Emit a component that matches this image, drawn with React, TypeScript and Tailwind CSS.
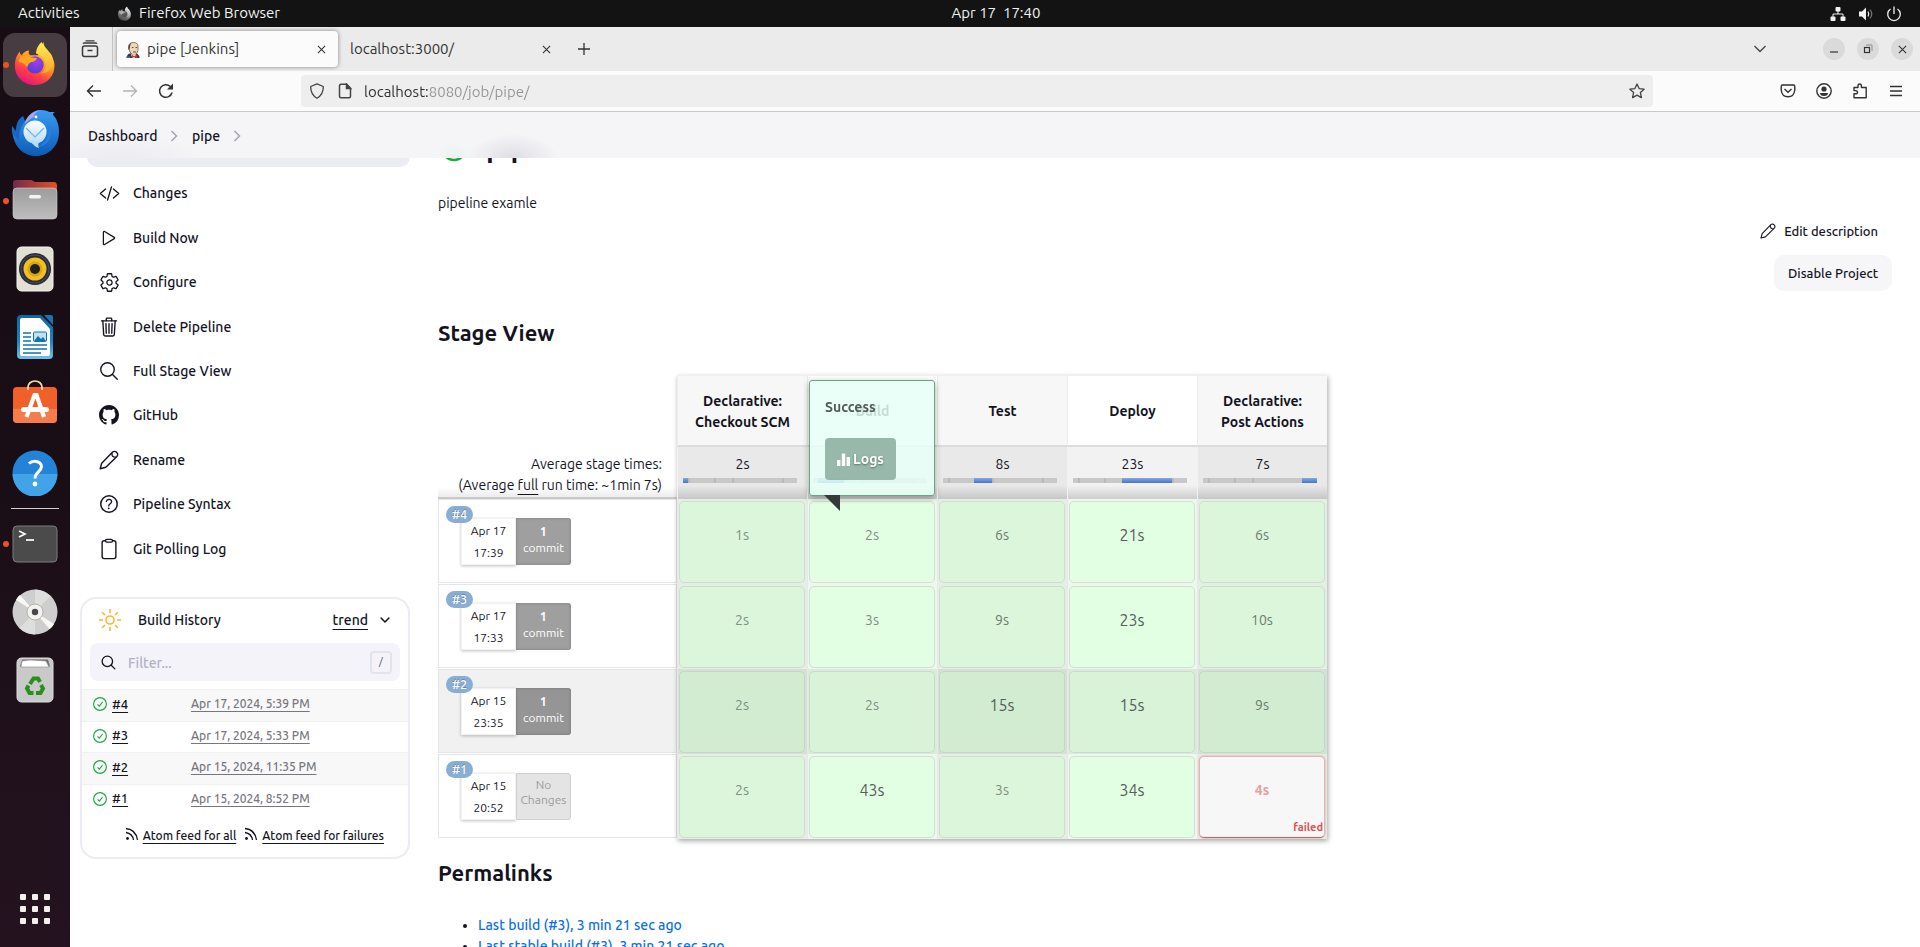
import type { ReactNode } from "react";
import {
  IoChevronDownOutline,
  IoClipboardOutline,
  IoCodeSlashOutline,
  IoHelpCircleOutline,
  IoPlayOutline,
  IoSearchOutline,
  IoSettingsOutline,
  IoTrashOutline,
} from "react-icons/io5";

/* ---------- Dock icons ---------- */

function FirefoxIcon({ className }: { className: string }) {
  return (
    <svg viewBox="0 0 48 48" className={className} aria-hidden="true">
      <defs>
        <linearGradient id="ffBody" x1="0.75" y1="0.1" x2="0.3" y2="1">
          <stop offset="0" stopColor="#ffe23a" />
          <stop offset="0.4" stopColor="#ff9a22" />
          <stop offset="0.7" stopColor="#ff3f45" />
          <stop offset="1" stopColor="#e4127f" />
        </linearGradient>
        <linearGradient id="ffFlame" x1="0.5" y1="0" x2="0.5" y2="1">
          <stop offset="0" stopColor="#fff04f" />
          <stop offset="1" stopColor="#ffa22d" />
        </linearGradient>
        <radialGradient id="ffGlobe" cx="0.6" cy="0.3" r="0.8">
          <stop offset="0" stopColor="#a33cf0" />
          <stop offset="1" stopColor="#4a3fd0" />
        </radialGradient>
      </defs>
      <path
        fill="url(#ffBody)"
        d="M3 27C3 20 5 16 8 12c0 2 1 3 2 4 2-3 5-5 8-5-1 2-1 3 1 5h8c1-6 3-10 6-14 0 5 3 7 6 12 5 6 6 11 5 16-1 10-10 17-20 17C12 47 3 38 3 27z"
      />
      <path fill="url(#ffFlame)" d="M31 2c-4 3-6 8-6 12 6 2 10 6 10 12 0 5-3 8-6 9 9 0 14-5 14-12 0-8-4-10-7-14-3-3-4-4-5-7z" />
      <circle cx="24" cy="26" r="9" fill="url(#ffGlobe)" />
      <path
        fill="#ffa51e"
        d="M9 17c4-1 8 0 10 1 3 0 5 1 7 1-1 3-4 4-6 4-2 1-4 3-4 6-2-4-4-5-9-6 0-2 1-4 2-6z"
      />
    </svg>
  );
}

function ThunderbirdIcon() {
  return (
    <svg viewBox="0 0 48 46" className="h-[46px] w-12" aria-hidden="true">
      <defs>
        <linearGradient id="tbBody" x1="0.5" y1="0" x2="0.5" y2="1">
          <stop offset="0" stopColor="#3a9bf4" />
          <stop offset="1" stopColor="#0b5cb5" />
        </linearGradient>
        <linearGradient id="tbMail" x1="0.5" y1="0" x2="0.5" y2="1">
          <stop offset="0" stopColor="#ffffff" />
          <stop offset="1" stopColor="#b9dcfb" />
        </linearGradient>
      </defs>
      <path fill="#1765c4" d="M1 16c2 2 3 4 4 5 0-7 2-12 7-15 2 4 3 7 2 12l-4 20C3 32 0 24 1 16z" />
      <path
        fill="url(#tbBody)"
        d="M17 8c2-5 7-8 13-8 4 0 7 1 8 2h6c-2 1-2 2-2 3 4 4 6 10 6 17 0 14-10 24-23 24C12 46 3 36 2 24l6 7c-1-9 3-18 9-23z"
      />
      <path fill="#a9a2f2" d="M14 14c1-8 8-13 16-14-5 2-7 4-7 7-3 1-6 4-9 7z" />
      <path fill="#2a7fe0" d="M36 12c5 9 1 20-9 25 13-2 17-16 9-25z" />
      <circle cx="25" cy="7" r="1.4" fill="#fff" />
      <circle cx="24" cy="22" r="11.5" fill="url(#tbMail)" />
      <path fill="#b9dcfb" d="M20 31c1 3 4 6 8 7-1-2-1-4 0-6z" />
      <path d="M15 18l9 9 9-9" fill="none" stroke="#6db3ee" strokeWidth="1.2" />
    </svg>
  );
}

function FilesIcon() {
  return (
    <svg viewBox="0 0 48 42" className="mb-1 h-[42px] w-12" aria-hidden="true">
      <defs>
        <linearGradient id="fiBack" x1="0" x2="1">
          <stop offset="0" stopColor="#74284f" />
          <stop offset="1" stopColor="#e2521f" />
        </linearGradient>
        <linearGradient id="fiFront" x1="0" y1="0" x2="0" y2="1">
          <stop offset="0" stopColor="#9c9c9c" />
          <stop offset="1" stopColor="#bdbdbd" />
        </linearGradient>
      </defs>
      <path fill="url(#fiBack)" d="M2 14V5q0-3 3-3h15q1 0 2 1l2 1h19q3 0 3 4v8z" />
      <rect x="2" y="10" width="44" height="31" rx="4" fill="url(#fiFront)" stroke="#d0d0d0" strokeWidth="0.6" />
      <rect x="18" y="17" width="12" height="3.5" rx="1.7" fill="#f4f4f4" />
    </svg>
  );
}

function SpeakerIcon() {
  return (
    <svg viewBox="0 0 38 46" className="h-[46px] w-[38px]" aria-hidden="true">
      <rect x="1" y="1" width="36" height="44" rx="4.5" fill="#e2dfd5" stroke="#f5f3ec" />
      <circle cx="19" cy="23" r="16" fill="#2c2c38" />
      <circle cx="19" cy="23" r="14" fill="none" stroke="#4c4c5a" />
      <circle cx="19" cy="23" r="11.5" fill="#f0bf26" />
      <circle cx="19" cy="23" r="7.5" fill="#d9a50c" />
      <circle cx="19" cy="23" r="5" fill="#1f1f1f" />
    </svg>
  );
}

function WriterIcon() {
  return (
    <svg viewBox="0 0 38 46" className="h-[46px] w-[38px]" aria-hidden="true">
      <defs>
        <linearGradient id="wrBg" x1="0" y1="0" x2="0" y2="1">
          <stop offset="0" stopColor="#0f66a0" />
          <stop offset="0.6" stopColor="#1c85c2" />
          <stop offset="1" stopColor="#74c1ea" />
        </linearGradient>
      </defs>
      <path fill="url(#wrBg)" d="M5 1h20l12 12v28q0 4-4 4H5q-4 0-4-4V5q0-4 4-4z" />
      <path fill="#1278b5" d="M28 1h7q2 0 2 2v8z" />
      <path fill="#fff" d="M6 4h18l10 11v25q0 2-2 2H6q-2 0-2-2V6q0-2 2-2z" />
      <path d="M7 19h8M7 23h8M7 27h8M7 31h24M7 35h24M7 39h18" stroke="#0f74b0" strokeWidth="1.7" />
      <rect x="17.5" y="18" width="13" height="9.5" rx="1" fill="#bfe2f5" stroke="#0f74b0" />
      <path fill="#0f74b0" d="M18 27l4-5 3 3 2-2 3 4z" />
    </svg>
  );
}

function SoftwareIcon() {
  return (
    <svg viewBox="0 0 48 46" className="mb-2 h-[46px] w-12" aria-hidden="true">
      <rect x="2" y="9" width="44" height="36" rx="4" fill="#f0602b" />
      <path fill="#f58a59" d="M2 31h44v10q0 4-4 4H6q-4 0-4-4z" opacity="0.7" />
      <path d="M17 12V9a7 6 0 0 1 14 0v3" fill="none" stroke="#f3dfae" strokeWidth="1.7" />
      <path d="M15.5 39L23.5 17h2L33 39" fill="none" stroke="#fff" strokeWidth="4.2" />
      <rect x="10" y="29" width="28" height="5" rx="2.5" fill="#fff" />
    </svg>
  );
}

function HelpIcon() {
  return (
    <svg viewBox="0 0 46 46" className="size-[46px]" aria-hidden="true">
      <circle cx="23" cy="23" r="22.5" fill="#2383d6" />
      <path fill="#43a3e8" d="M0.5 24h45a22.5 22.5 0 0 1-45 0z" />
      <path d="M17 13.5c3-3 12-3.5 12.5 3 0 5-6.5 5.5-6.5 12" fill="none" stroke="#fff" strokeWidth="3" />
      <circle cx="23" cy="34" r="2.4" fill="#fff" />
    </svg>
  );
}

function TerminalIcon() {
  return (
    <svg viewBox="0 0 46 38" className="h-[38px] w-[46px]" aria-hidden="true">
      <rect x="1" y="1" width="44" height="36" rx="4" fill="#4b4b4b" stroke="#7c7c7c" />
      <path d="M7 6l6 3-6 3" fill="none" stroke="#fff" strokeWidth="1.7" />
      <path d="M14 15h8" stroke="#fff" strokeWidth="1.7" />
    </svg>
  );
}

function DiscIcon() {
  return (
    <svg viewBox="0 0 46 46" className="size-[46px]" aria-hidden="true">
      <circle cx="23" cy="23" r="22.5" fill="#cecece" />
      <path fill="#dedede" d="M23 23V0.5a22.5 22.5 0 0 1 15.5 6.5zM23 23v22.5a22.5 22.5 0 0 1-15.5-6.5z" />
      <path fill="#f8f8f2" d="M23 23L4 11q2-4 4-5zM23 23l19 12q-1.5 3-4.5 5z" />
      <circle cx="23" cy="23" r="8" fill="#f2f2f2" stroke="#b9b19b" />
      <circle cx="23" cy="23" r="3.2" fill="#484848" />
    </svg>
  );
}

function TrashCanIcon() {
  return (
    <svg viewBox="0 0 38 46" className="h-[46px] w-[38px]" aria-hidden="true">
      <rect x="1" y="1" width="36" height="44" rx="4.5" fill="#c9c9c9" stroke="#dddddd" />
      <path fill="#6f6f6f" d="M6 2.5h26l2 7H4z" />
      <path fill="#fff" stroke="#888" strokeWidth="0.6" d="M6 4l8-1 16 1 3 6H5z" />
      <g fill="none" stroke="#2c8d20" strokeWidth="4">
        <path d="M14 27l3.500-5.500h4.500l2 3.500" />
        <path d="M25 28l2 3.500-2.500 4.500H20" />
        <path d="M17.500 36H13.500l-2.500-4.500 1.500-3" />
      </g>
    </svg>
  );
}

function AppGridIcon() {
  return (
    <span className="grid grid-cols-3 gap-1.5">
      {[0, 1, 2, 3, 4, 5, 6, 7, 8].map((n) => (
        <span key={n} className="size-1.5 rounded-[1px] bg-[#f2f0ee]" />
      ))}
    </span>
  );
}

type DockEntry = { label: string; icon: ReactNode; running?: boolean; active?: boolean };

const pinned: DockEntry[] = [
  { label: "Firefox Web Browser", icon: <FirefoxIcon className="mb-1 size-[46px]" />, running: true, active: true },
  { label: "Thunderbird Mail", icon: <ThunderbirdIcon /> },
  { label: "Files", icon: <FilesIcon />, running: true },
  { label: "Rhythmbox", icon: <SpeakerIcon /> },
  { label: "LibreOffice Writer", icon: <WriterIcon /> },
  { label: "Ubuntu Software", icon: <SoftwareIcon /> },
  { label: "Help", icon: <HelpIcon /> },
];

const opened: DockEntry[] = [
  { label: "Terminal", icon: <TerminalIcon />, running: true },
  { label: "Disc", icon: <DiscIcon /> },
  { label: "Trash", icon: <TrashCanIcon /> },
];

function DockList({ entries }: { entries: DockEntry[] }) {
  return (
    <ul className="flex flex-col gap-1">
      {entries.map((e) => (
        <li key={e.label} className="relative">
          <button
            type="button"
            aria-label={e.label}
            className={`flex size-16 items-center justify-center rounded-xl ${e.active ? "bg-[#463c42]" : ""}`}
          >
            {e.icon}
          </button>
          {e.running && <span className="absolute top-[29px] left-0 size-1.5 rounded-full bg-[#e95420]" />}
        </li>
      ))}
    </ul>
  );
}

function Dock() {
  return (
    <aside className="flex w-[70px] shrink-0 flex-col items-center bg-linear-to-b from-[#190d15] via-[#1a0e16] to-[#24131f] py-1.5">
      <DockList entries={pinned} />
      <hr className="my-[3px] w-12 border-[#d4d0d2]" />
      <DockList entries={opened} />
      <button type="button" aria-label="Show applications" className="mt-auto flex size-16 items-center justify-center">
        <AppGridIcon />
      </button>
    </aside>
  );
}

/* ---------- System bar ---------- */

function SystemBar() {
  return (
    <header className="grid h-[27px] shrink-0 grid-cols-3 items-center bg-[#131313] text-[15px] text-[#f2f2f2]">
      <div className="flex items-center pl-[18px]">
        <button type="button" className="w-[99px] text-left">Activities</button>
        <button type="button" className="flex items-center gap-[7px]">
          <FirefoxIcon className="size-[15px] grayscale" />
          Firefox Web Browser
        </button>
      </div>
      <time className="pl-[72px] text-center whitespace-pre">Apr 17  17:40</time>
      <div className="flex items-center justify-end gap-3 pr-[18px]">
        <svg viewBox="0 0 16 16" className="size-4" fill="#f2f2f2" aria-label="Wired network">
          <rect x="5.5" y="1" width="5" height="4.5" rx="1" />
          <rect x="0.5" y="10.5" width="5" height="4.5" rx="1" />
          <rect x="10.5" y="10.5" width="5" height="4.5" rx="1" />
          <path d="M8 5v3M3 11V8h10v3" fill="none" stroke="#f2f2f2" strokeWidth="1" />
        </svg>
        <svg viewBox="0 0 16 16" className="size-4" aria-label="Volume">
          <path fill="#f2f2f2" d="M1 5.5h3L8 1.5v13l-4-4H1z" />
          <path d="M10 5.5q1.5 2.5 0 5" fill="none" stroke="#f2f2f2" strokeWidth="1.2" />
          <path d="M12 3.5q3.5 4.5 0 9" fill="none" stroke="#777" strokeWidth="1.2" />
        </svg>
        <svg viewBox="0 0 16 16" className="size-4" aria-label="Power">
          <path d="M4.5 3a6.3 6.3 0 1 0 7 0M8 0.5V8" fill="none" stroke="#f2f2f2" strokeWidth="1.3" />
        </svg>
      </div>
    </header>
  );
}

/* ---------- Browser chrome ---------- */

function CrossIcon({ className }: { className: string }) {
  return (
    <svg viewBox="0 0 10 10" className={className} aria-hidden="true">
      <path d="M1 1l8 8M9 1l-8 8" fill="none" stroke="currentColor" strokeWidth="1.2" />
    </svg>
  );
}

function JenkinsFavicon() {
  return (
    <svg viewBox="0 0 16 16" className="size-4 shrink-0" aria-hidden="true">
      <path fill="#3a3a3a" d="M1.5 16q0-3 3-4.5h7q3 1.5 3 4.5z" />
      <path fill="#f0d6b7" stroke="#5a4636" strokeWidth="0.7" d="M4 4q0-3.5 4.5-3.5T13 4.5v4Q12 13 9 13T4.5 9z" />
      <path fill="#5b4a42" d="M3.5 8Q2 2.5 6.5 0.7 5 3 5 5.5z" />
      <path d="M7 5.5h1.5M10.5 5.5H12M8 10h3" stroke="#4a3a30" strokeWidth="0.9" />
      <path fill="#fff" d="M6 12.5h5l-1.5 3.5h-2z" />
      <path fill="#d33833" d="M7 13l2.5 1L12 13v3l-2.5-1L7 16z" />
      <path fill="#2d6ea3" d="M2 14.5h3l0.5 1.5h-4z" />
    </svg>
  );
}

function TabStrip() {
  return (
    <div className="flex h-11 shrink-0 items-center bg-[#ebebeb] pr-[7px] text-[15px] text-[#333]">
      <div className="flex h-full w-[43px] items-center justify-center border-r border-[#c4c4c4] pr-0.5">
        <button type="button" aria-label="Recent browsing">
          <svg viewBox="0 0 18 18" className="size-[18px]" fill="none" stroke="#3a3a3a" strokeWidth="1.5" aria-hidden="true">
            <rect x="1.5" y="6" width="15" height="10.5" rx="2" />
            <path d="M2 3.7q0.5-0.7 1.5-0.7h11q1 0 1.5 0.7M4.5 0.8h9M6.5 10.5h5" strokeWidth="1.3" />
          </svg>
        </button>
      </div>
      <div className="ml-1 flex h-9 w-[221px] items-center gap-1.5 rounded-sm bg-[#fbfbfb] pt-px pl-2 shadow-[0_0_4px_rgba(0,0,0,0.45)]">
        <JenkinsFavicon />
        <span className="grow">pipe [Jenkins]</span>
        <button type="button" aria-label="Close tab" className="mr-3">
          <CrossIcon className="size-[9px]" />
        </button>
      </div>
      <div className="flex w-[225px] items-center pt-px pl-3">
        <span className="grow">localhost:3000/</span>
        <button type="button" aria-label="Close tab" className="mr-3">
          <CrossIcon className="size-[9px]" />
        </button>
      </div>
      <button type="button" aria-label="New tab" className="ml-[15px]">
        <svg viewBox="0 0 12 12" className="size-3" aria-hidden="true">
          <path d="M6 0v12M0 6h12" stroke="#333" strokeWidth="1.3" />
        </svg>
      </button>
      <button type="button" aria-label="List all tabs" className="mr-[57px] ml-auto">
        <svg viewBox="0 0 12 8" className="h-2 w-3" aria-hidden="true">
          <path d="M0.5 1L6 6.5 11.5 1" fill="none" stroke="#444" strokeWidth="1.3" />
        </svg>
      </button>
      <div className="flex gap-3">
        <button type="button" aria-label="Minimize" className="flex size-[22px] items-center justify-center rounded-full bg-[#dadada]">
          <svg viewBox="0 0 10 10" className="size-2.5" aria-hidden="true">
            <path d="M1 8h8" stroke="#333" strokeWidth="1.2" />
          </svg>
        </button>
        <button type="button" aria-label="Restore" className="flex size-[22px] items-center justify-center rounded-full bg-[#dadada]">
          <svg viewBox="0 0 10 10" className="size-2.5" fill="none" aria-hidden="true">
            <path d="M3 1h6v6" stroke="#8c8c8c" strokeWidth="1" />
            <rect x="1.5" y="3.5" width="5" height="5" stroke="#333" strokeWidth="1.2" />
          </svg>
        </button>
        <button type="button" aria-label="Close window" className="flex size-[22px] items-center justify-center rounded-full bg-[#dadada]">
          <CrossIcon className="size-[9px]" />
        </button>
      </div>
    </div>
  );
}

function Toolbar() {
  return (
    <div className="flex h-[41px] shrink-0 items-center border-b border-[#c9c9c9] bg-[#fbfbfb] px-4 text-[#333]">
      <div className="flex w-[215px] items-center gap-5">
        <button type="button" aria-label="Back">
          <svg viewBox="0 0 16 16" className="size-4" fill="none" stroke="#333" strokeWidth="1.4" aria-hidden="true">
            <path d="M1 8h14M7 2.5L1.5 8 7 13.5" />
          </svg>
        </button>
        <button type="button" aria-label="Forward" disabled>
          <svg viewBox="0 0 16 16" className="size-4" fill="none" stroke="#b4b4b4" strokeWidth="1.4" aria-hidden="true">
            <path d="M1 8h14M9 2.5L14.5 8 9 13.5" />
          </svg>
        </button>
        <button type="button" aria-label="Reload">
          <svg viewBox="0 0 16 16" className="size-4" aria-hidden="true">
            <path d="M14 9.5A6.3 6.3 0 1 1 12.3 3.5" fill="none" stroke="#333" strokeWidth="1.5" />
            <path d="M15 0.5v6H9z" fill="#333" />
          </svg>
        </button>
      </div>
      <div className="flex h-8 max-w-[1352px] grow items-center rounded bg-[#eeeeee] px-2">
        <svg viewBox="0 0 16 16" className="size-4" fill="none" stroke="#444" strokeWidth="1.3" aria-hidden="true">
          <path d="M8 0.8L14.3 3.5Q14.5 11.5 8 15.2 1.5 11.5 1.7 3.5z" strokeLinejoin="round" />
        </svg>
        <svg viewBox="0 0 14 16" className="ml-[13px] h-4 w-3.5" fill="none" stroke="#444" strokeWidth="1.5" aria-hidden="true">
          <path d="M8.5 1.2H3Q1.5 1.2 1.5 2.7v10.6q0 1.5 1.5 1.5h8q1.5 0 1.5-1.5V5.2z" />
          <path d="M8.5 1v4.5h4z" fill="#444" />
        </svg>
        <input
          aria-label="Address"
          readOnly
          value="localhost:8080/job/pipe/"
          className="mt-0.5 ml-3 min-w-0 grow bg-[linear-gradient(to_right,#2b2b2b_64px,#949494_64px)] bg-clip-text text-[15px] text-transparent outline-none"
        />
        <button type="button" aria-label="Bookmark this page">
          <svg viewBox="0 0 16 16" className="size-4" fill="none" stroke="#444" strokeWidth="1.3" strokeLinejoin="round" aria-hidden="true">
            <path d="M8 1l2.1 4.6 5 0.6-3.7 3.4 1 5L8 12.1l-4.4 2.5 1-5L0.9 6.2l5-0.6z" />
          </svg>
        </button>
      </div>
      <div className="ml-auto flex items-center gap-5">
        <button type="button" aria-label="Save to Pocket">
          <svg viewBox="0 0 16 16" className="size-4" fill="none" stroke="#333" strokeWidth="1.4" aria-hidden="true">
            <path d="M2.5 2h11q1.3 0 1.3 1.3V7Q14 13.8 8 13.8T1.2 7V3.3Q1.2 2 2.5 2z" />
            <path d="M4.500 6L8 9.300 11.500 6" />
          </svg>
        </button>
        <button type="button" aria-label="Account">
          <svg viewBox="0 0 16 16" className="size-4" aria-hidden="true">
            <circle cx="8" cy="8" r="7.2" fill="none" stroke="#333" strokeWidth="1.4" />
            <circle cx="8" cy="6" r="2.6" fill="#333" />
            <path d="M4 10h8q0 3-4 3t-4-3z" fill="#333" />
          </svg>
        </button>
        <button type="button" aria-label="Extensions">
          <svg viewBox="0 0 16 16" className="size-4" fill="none" stroke="#333" strokeWidth="1.4" strokeLinejoin="round" aria-hidden="true">
            <path d="M2 4.5h4V3q0-2 1.7-2t1.7 2v1.5h4.8v10.3H2v-4h1.5q2 0 2-1.6t-2-1.6H2z" />
          </svg>
        </button>
        <button type="button" aria-label="Open menu">
          <svg viewBox="0 0 16 16" className="size-4" aria-hidden="true">
            <path d="M2 3.5h12M2 8h12M2 12.5h12" stroke="#333" strokeWidth="1.4" />
          </svg>
        </button>
      </div>
    </div>
  );
}

/* ---------- Jenkins page ---------- */

function GithubMark() {
  return (
    <svg viewBox="0 0 16 16" className="size-5" fill="currentColor" aria-hidden="true">
      <path d="M8 0C3.58 0 0 3.58 0 8c0 3.54 2.29 6.53 5.47 7.59.4.07.55-.17.55-.38 0-.19-.01-.82-.01-1.49-2.01.37-2.53-.49-2.69-.94-.09-.23-.48-.94-.82-1.13-.28-.15-.68-.52-.01-.53.63-.01 1.08.58 1.23.82.72 1.21 1.87.87 2.33.66.07-.52.28-.87.51-1.07-1.78-.2-3.64-.89-3.64-3.95 0-.87.31-1.59.82-2.15-.08-.2-.36-1.02.08-2.12 0 0 .67-.21 2.2.82.64-.18 1.32-.27 2-.27.68 0 1.36.09 2 .27 1.53-1.04 2.2-.82 2.2-.82.44 1.1.16 1.92.08 2.12.51.56.82 1.27.82 2.15 0 3.07-1.87 3.75-3.65 3.95.29.25.54.73.54 1.48 0 1.07-.01 1.93-.01 2.2 0 .21.15.46.55.38A8.013 8.013 0 0 0 16 8c0-4.42-3.58-8-8-8z" />
    </svg>
  );
}

function PencilIcon({ className }: { className: string }) {
  return (
    <svg
      viewBox="0 0 20 20"
      className={className}
      fill="none"
      stroke="currentColor"
      strokeWidth="1.4"
      strokeLinejoin="round"
      aria-hidden="true"
    >
      <path d="M1.200 18.800L2.700 13.300 13.600 2.100a2.600 2.600 0 0 1 3.700 0l0.600 0.600a2.600 2.600 0 0 1 0 3.700L6.800 17.300z" />
      <path d="M12.800 3l0.300 2.200q0.300 1.400 1.700 1.700l2.200 0.300" />
    </svg>
  );
}

function BreadcrumbSeparator() {
  return (
    <svg viewBox="0 0 8 12" className="h-3 w-2" aria-hidden="true">
      <path d="M1.5 1l5 5-5 5" fill="none" stroke="#a5a3b5" strokeWidth="1.5" />
    </svg>
  );
}

function Breadcrumbs() {
  return (
    <nav
      aria-label="Breadcrumbs"
      className="sticky top-0 z-10 flex h-[46px] items-center bg-[#f5f5f8] bg-[radial-gradient(45px_24px_at_443px_46px,#dddde4,transparent),radial-gradient(80px_22px_at_50px_46px,#ebebf0,transparent),radial-gradient(20px_16px_at_384px_46px,#e9f3ee,transparent)] pt-0.5 pl-[18px] text-sm font-medium"
    >
      <a href="#dashboard" className="w-[82px]">Dashboard</a>
      <BreadcrumbSeparator />
      <a href="#pipe" className="ml-[14px] w-[41px]">pipe</a>
      <BreadcrumbSeparator />
    </nav>
  );
}

const tasks: { label: string; icon: ReactNode }[] = [
  { label: "Changes", icon: <IoCodeSlashOutline className="size-[21px]" /> },
  { label: "Build Now", icon: <IoPlayOutline className="size-5" /> },
  { label: "Configure", icon: <IoSettingsOutline className="size-[21px]" /> },
  { label: "Delete Pipeline", icon: <IoTrashOutline className="size-[22px]" /> },
  { label: "Full Stage View", icon: <IoSearchOutline className="size-[22px]" /> },
  { label: "GitHub", icon: <GithubMark /> },
  { label: "Rename", icon: <PencilIcon className="size-5" /> },
  { label: "Pipeline Syntax", icon: <IoHelpCircleOutline className="size-6" /> },
  { label: "Git Polling Log", icon: <IoClipboardOutline className="size-[22px]" /> },
];

const builds = [
  { id: "#4", date: "Apr 17, 2024, 5:39 PM" },
  { id: "#3", date: "Apr 17, 2024, 5:33 PM" },
  { id: "#2", date: "Apr 15, 2024, 11:35 PM" },
  { id: "#1", date: "Apr 15, 2024, 8:52 PM" },
];

function FeedIcon() {
  return (
    <svg viewBox="0 0 14 14" className="mb-1 size-3.5" fill="none" stroke="#14141f" strokeWidth="1.3" aria-hidden="true">
      <path d="M1 1.500Q11 2.500 12.500 13M1 5.500q6.500 1 7.500 7.500" />
      <circle cx="2.5" cy="11.5" r="1.4" fill="#14141f" stroke="none" />
    </svg>
  );
}

function BuildHistory() {
  return (
    <section className="mt-[26px] ml-2.5 rounded-2xl border-2 border-[#ebebf3] pb-3">
      <div className="flex h-11 items-center pr-4 pb-0.5 pl-4 text-sm font-medium">
        <svg viewBox="0 0 24 24" className="size-6" fill="none" stroke="#fdb52b" strokeWidth="1.6" aria-hidden="true">
          <circle cx="12" cy="12" r="4" />
          <path d="M12 1v4M12 19v4M1 12h4M19 12h4M4.200 4.200L7 7M17 17l2.800 2.800M4.200 19.800L7 17M17 7l2.800-2.800" />
        </svg>
        <h2 className="ml-4 grow">Build History</h2>
        <a href="#trend" className="underline underline-offset-4">trend</a>
        <button type="button" aria-label="Collapse build history" className="ml-2.5">
          <IoChevronDownOutline className="size-[14px] [&_path]:stroke-[56px]" />
        </button>
      </div>
      <label className="mx-2 flex h-[38px] items-center rounded-lg bg-[#f3f3f9] pr-2 pl-2.5">
        <IoSearchOutline className="size-[17px] [&_path]:stroke-[40px]" />
        <input
          type="search"
          aria-label="Filter builds"
          placeholder="Filter..."
          className="mt-0.5 ml-[11px] min-w-0 grow bg-transparent text-sm font-medium outline-none placeholder:text-[#b1b1c6]"
        />
        <kbd className="flex h-[23px] w-[22px] items-center justify-center rounded border-2 border-[#e4e3ec] font-[Roboto,sans-serif] text-xs text-[#6c6a80]">
          /
        </kbd>
      </label>
      <table className="mt-2 h-[126px] w-full table-fixed text-xs font-medium">
        <tbody>
          {builds.map((b) => (
            <tr key={b.id} className="border-t border-[#f1f1f1] odd:bg-[#f8f8f8]">
              <td className="w-[109px] pb-0.5 pl-[11px]">
                <a href={b.id} className="flex items-center gap-[5px]">
                  <svg viewBox="0 0 16 16" className="size-3.5" fill="none" stroke="#1ea64b" aria-hidden="true">
                    <circle cx="8" cy="8" r="7.3" strokeWidth="1.3" />
                    <path d="M5.200 8.500l2 2 3.800-4.800" strokeWidth="1.3" />
                  </svg>
                  <span className="text-[13px] underline underline-offset-3">{b.id}</span>
                </a>
              </td>
              <td className="pb-0.5">
                <a href={b.id} className="text-[#77767e] underline underline-offset-3">{b.date}</a>
              </td>
            </tr>
          ))}
        </tbody>
      </table>
      <div className="mt-3 flex items-center justify-end pr-6 text-xs font-medium">
        <FeedIcon />
        <a href="#rss-all" className="mr-2 ml-1 underline underline-offset-3">Atom feed for all</a>
        <FeedIcon />
        <a href="#rss-failed" className="ml-1 underline underline-offset-3">Atom feed for failures</a>
      </div>
    </section>
  );
}

function Sidebar() {
  return (
    <aside className="w-[340px] shrink-0 pt-[15px]">
      <nav aria-label="Project" className="flex flex-col gap-1 pl-[17px] text-sm font-medium">
        <a href="#status" className="flex h-10 items-center rounded-[10px] bg-[#ecedf3] pl-[45px]">
          Status
        </a>
        <ul className="grid h-[400px] auto-rows-fr">
          {tasks.map((t) => (
            <li key={t.label} className="flex items-center">
              <a href={`#${t.label}`} className="flex items-center gap-3 pl-2.5">
                <span className="flex w-6 justify-center">{t.icon}</span>
                {t.label}
              </a>
            </li>
          ))}
        </ul>
      </nav>
      <BuildHistory />
    </aside>
  );
}

type Stage = { name: string[]; average: string; from: number; to: number };

const stages: Stage[] = [
  { name: ["Declarative:", "Checkout SCM"], average: "2s", from: 0, to: 4 },
  { name: ["Build"], average: "12s", from: 4, to: 27 },
  { name: ["Test"], average: "8s", from: 27, to: 43 },
  { name: ["Deploy"], average: "23s", from: 43, to: 87 },
  { name: ["Declarative:", "Post Actions"], average: "7s", from: 87, to: 100 },
];

const runs = [
  { id: "#4", day: "Apr 17", time: "17:39", commits: 1, cells: ["1s", "2s", "6s", "21s", "6s"] },
  { id: "#3", day: "Apr 17", time: "17:33", commits: 1, cells: ["2s", "3s", "9s", "23s", "10s"] },
  { id: "#2", day: "Apr 15", time: "23:35", commits: 1, cells: ["2s", "2s", "15s", "15s", "9s"], shaded: true },
  { id: "#1", day: "Apr 15", time: "20:52", commits: 0, cells: ["2s", "43s", "3s", "34s", "4s"], failed: 4 },
];

function StagePopover() {
  return (
    <div className="absolute top-1 left-px z-10 h-[116px] w-[126px] rounded-[3px] border border-[#6ba585] bg-[#e5fff6]/85 px-[15px] pt-4 text-left shadow-[0_2px_6px_rgba(0,0,0,0.35)]">
      <div className="text-sm text-[#4f5c57]">Success</div>
      <button
        type="button"
        className="mt-[21px] flex h-[42px] w-[71px] items-center justify-center gap-[3px] rounded bg-[#8fb0a2]/90 text-sm text-white [text-shadow:0_1px_2px_rgba(0,0,0,0.4)]"
      >
        <svg viewBox="0 0 13 13" className="size-[13px]" fill="#fff" aria-hidden="true">
          <rect x="0" y="7" width="3.4" height="6" rx="0.5" />
          <rect x="4.8" y="0.5" width="3.4" height="12.5" rx="0.5" />
          <rect x="9.6" y="4" width="3.4" height="9" rx="0.5" />
        </svg>
        Logs
      </button>
      <svg viewBox="0 0 16 16" className="absolute top-[114px] left-[14px] size-4" aria-hidden="true">
        <path d="M0 0h16v16z" fill="#343a37" />
      </svg>
    </div>
  );
}

function TimelineBar({ stage }: { stage: Stage }) {
  return (
    <div className="relative mt-[3px] mr-2.5 ml-[5px] h-[5px] bg-[#c8c8c8]">
      {stages.slice(1).map((s) => (
        <span key={s.from} className="absolute inset-y-0 w-0.5 bg-[#b9b9b9]" style={{ left: `${s.from}%` }} />
      ))}
      <span
        className="absolute inset-y-0 bg-linear-to-b from-[#86a9d8] to-[#4474cc]"
        style={{ left: `${stage.from}%`, width: `${stage.to - stage.from}%` }}
      />
    </div>
  );
}

function StageTable() {
  return (
    <div className="relative mt-7 w-[889px]">
      <table className="w-full table-fixed border-separate border-spacing-0 text-sm">
        <thead>
          <tr className="h-[72px]">
            <td className="w-[239px]" />
            {stages.map((s, i) => (
              <th
                key={i}
                scope="col"
                className={`relative border-t border-b-2 border-l border-t-[#f0f0f0] border-b-[#dcdcdc] border-l-[#ececec] pt-0.5 leading-[21px] font-bold ${
                  i % 2 === 0 ? "bg-[#f7f7f7]" : "bg-white"
                }`}
              >
                {s.name.map((line) => (
                  <div key={line}>{line}</div>
                ))}
                {i === 1 && <StagePopover />}
              </th>
            ))}
          </tr>
          <tr className="h-[52px]">
            <th
              scope="row"
              className="border-b-2 border-[#cacaca] bg-[linear-gradient(to_top,#ececec,#fff_10px)] pt-[7px] pr-[15px] text-right align-top leading-[21px] font-normal"
            >
              Average stage times:
              <br />
              (Average <span className="underline underline-offset-4">full</span> run time: ~1min 7s)
            </th>
            {stages.map((s, i) => (
              <td
                key={i}
                className={`border-l border-[#f2f2f2] pt-[7px] text-center align-top leading-[21px] ${
                  i % 2 === 0
                    ? "bg-[linear-gradient(to_top,#c6c6c6,#e9e9e9_14px)]"
                    : "bg-[linear-gradient(to_top,#cdcdcd,#f2f2f2_14px)]"
                }`}
              >
                {s.average}
                <TimelineBar stage={s} />
              </td>
            ))}
          </tr>
        </thead>
        <tbody>
          {runs.map((r) => (
            <tr key={r.id} className="h-[85px]">
              <th scope="row" className="pb-px align-top font-normal">
                <div className={`h-[84px] border border-[#e6e6e6] pt-1.5 pl-[7px] ${r.shaded ? "bg-[#f1f1f1]" : "bg-white"}`}>
                  <a
                    href={r.id}
                    className="relative z-[1] flex h-[17px] w-[27px] items-center justify-center rounded-full bg-[#89add3] text-xs font-medium text-white [text-shadow:0_-1px_0_rgba(0,0,0,0.25)]"
                  >
                    {r.id}
                  </a>
                  <div className="-mt-[5px] ml-[15px] flex h-[47px] w-[110px] text-xs">
                    <div className="w-[55px] border border-[#f1f1f1] bg-white pt-px text-center leading-[22px] shadow-[0_1px_3px_rgba(0,0,0,0.25)]">
                      {r.day}
                      <br />
                      {r.time}
                    </div>
                    {r.commits > 0 ? (
                      <div
                        className={`w-[55px] rounded-r-[3px] pt-1.5 text-center leading-4 text-white inset-shadow-[0_0_3px_rgba(0,0,0,0.25)] ${
                          r.shaded ? "bg-[#959595]" : "bg-[#9f9f9f]"
                        }`}
                      >
                        <b>{r.commits}</b>
                        <br />
                        commit
                      </div>
                    ) : (
                      <div className="w-[55px] rounded-r-[3px] border border-[#d0d0d0] bg-[#e4e4e4] pt-[3px] text-center leading-[15px] text-[#9c9c9c]">
                        No
                        <br />
                        Changes
                      </div>
                    )}
                  </div>
                </div>
              </th>
              {r.cells.map((value, i) => {
                const failed = r.failed === i;
                const odd = i % 2 === 0;
                const outer = r.shaded
                  ? odd ? "bg-[#d3e3d3]" : "bg-[#dbebdb]"
                  : odd ? "bg-[#e2efe2]" : "bg-[#ebf8eb]";
                const inner = failed
                  ? "bg-[#f7f7f7] border-[#e6b3b3] border-b-[#cf5b5b] shadow-[0_0_2px_#e58a8a]"
                  : r.shaded
                    ? odd ? "bg-[#d1ecd1] border-[#c8d4c8]" : "bg-[#d9f3d9] border-[#cdd9cd]"
                    : odd ? "bg-[#dcf6dc] border-[#cfdccf]" : "bg-[#e3ffe3] border-[#d3dfd3]";
                const seconds = parseInt(value, 10);
                const text = failed
                  ? "text-sm font-bold text-[#e9a0a0]"
                  : seconds >= 15
                    ? "text-base text-[#55605a]"
                    : seconds >= 6
                      ? "text-sm text-[#6c7b6e]"
                      : "text-sm text-[#7f9183]";
                return (
                  <td key={i} className={`border-l border-[#ebe6ed] py-px pr-0.5 pl-px ${outer}`}>
                    <div className={`relative flex h-[82px] items-center justify-center rounded-[5px] border pb-3.5 ${inner} ${text}`}>
                      {value}
                      {failed && (
                        <span className="absolute right-px bottom-0.5 text-[11px] leading-4 font-bold text-[#d9534f]">failed</span>
                      )}
                    </div>
                  </td>
                );
              })}
            </tr>
          ))}
        </tbody>
      </table>
      <div className="pointer-events-none absolute inset-y-0 right-0 left-[239px] shadow-[1px_2px_5px_rgba(0,0,0,0.35)]" />
    </div>
  );
}

function ProjectPage() {
  return (
    <main className="min-w-0 grow pt-5 pr-7 pl-7 text-sm">
      <h1 className="flex h-8 items-center gap-4 text-[28px] font-bold">
        <svg viewBox="0 0 32 32" className="size-8" fill="none" stroke="#1ea64b" strokeWidth="2.5" aria-label="Success">
          <circle cx="16" cy="16" r="12" />
          <path d="M11 16.500l4 4 6.500-8" />
        </svg>
        pipe
      </h1>
      <p className="mt-[29px] leading-5">pipeline examle</p>
      <div className="flex flex-col items-end gap-1.5 text-[13px] font-medium">
        <button type="button" className="flex h-9 items-center gap-2 px-3.5">
          <PencilIcon className="size-4" />
          Edit description
        </button>
        <button type="button" className="h-9 rounded-[10px] bg-[#f6f6f9] px-3.5">Disable Project</button>
      </div>
      <h2 className="mt-7 text-[22px] leading-7 font-bold">Stage View</h2>
      <StageTable />
      <h2 className="mt-5 text-[22px] leading-7 font-bold">Permalinks</h2>
      <ul className="mt-7 list-disc pl-10 leading-[21px] font-medium">
        <li>
          <a href="#last" className="text-[#0b6fe8]">Last build (#3), 3 min 21 sec ago</a>
        </li>
        <li>
          <a href="#last-stable" className="text-[#0b6fe8]">Last stable build (#3), 3 min 21 sec ago</a>
        </li>
      </ul>
    </main>
  );
}

export default function App() {
  return (
    <div className="flex h-screen flex-col overflow-hidden bg-white font-[Ubuntu,Roboto,sans-serif] text-[#14141f]">
      <SystemBar />
      <div className="flex min-h-0 grow">
        <Dock />
        <div className="flex min-w-0 grow flex-col">
          <TabStrip />
          <Toolbar />
          <div className="min-h-0 grow overflow-hidden">
            <Breadcrumbs />
            <div className="-mt-[46px] flex">
              <Sidebar />
              <ProjectPage />
            </div>
          </div>
        </div>
      </div>
    </div>
  );
}
